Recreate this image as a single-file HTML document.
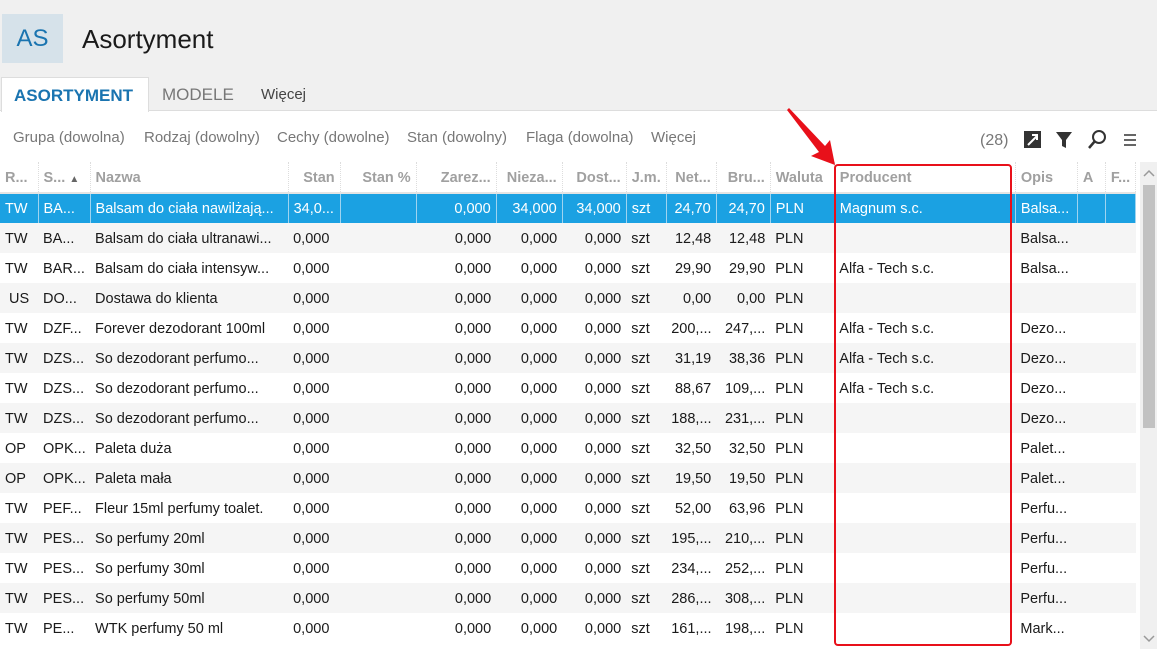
<!DOCTYPE html>
<html><head><meta charset="utf-8"><style>
*{margin:0;padding:0;box-sizing:border-box}
body{width:1157px;height:649px;overflow:hidden;background:#fff;font-family:"Liberation Sans",sans-serif;position:relative;color:#1a1a1a}
.top{position:absolute;left:0;top:0;width:1157px;height:77px;background:#f0f0f0}
.as{position:absolute;left:2px;top:14px;width:61px;height:49px;background:#d6e2ea;color:#1a74b0;font-size:24px;line-height:49px;text-align:center}
.title{position:absolute;left:82px;top:24px;font-size:26px;color:#1a1a1a}
.tabs{position:absolute;left:0;top:77px;width:1157px;height:34px;background:#f0f0f0;border-bottom:1px solid #ddd}
.tab1{position:absolute;left:1px;top:0;width:148px;height:35px;background:#fff;border:1px solid #ddd;border-bottom:none;color:#1a74b0;font-weight:bold;font-size:17px;line-height:36px;padding-left:12px}
.tab{position:absolute;top:1px;line-height:34px;font-size:17px;color:#777}
.filters{position:absolute;left:0;top:112px;height:50px;width:1157px;background:#fff}
.f{position:absolute;top:15px;font-size:15px;color:#777}
table{position:absolute;left:0;top:162px;border-collapse:collapse;table-layout:fixed;width:1136px;font-size:14.5px}
td,th{height:30px;white-space:nowrap;overflow:hidden;padding:1px 5px 0;font-weight:normal}
th{color:#a0a0a0;font-weight:bold;text-align:left;border-right:1px dotted #ddd;border-bottom:2px solid #e4e4e4;height:31px}
th.r,td.r{text-align:right}
tr.s{background:#f5f5f5}
tr.sel td{background:#1ba1e2;color:#fff;border-right:1px solid #9fd4f0}
.sb{position:absolute;left:1140px;top:162px;width:17px;height:487px;background:#f0f0f0}
.thumb{position:absolute;left:1143px;top:185px;width:12px;height:243px;background:#c2c2c2}
.redbox{position:absolute;left:834px;top:164px;width:178px;height:482px;border:2px solid #e8101a;border-radius:4px}
</style></head><body>
<div class="top"><div class="as">AS</div><div class="title">Asortyment</div></div>
<div class="tabs"><div class="tab1">ASORTYMENT</div><div class="tab" style="left:162px">MODELE</div><div class="tab" style="left:261px;font-size:15px;color:#444">Więcej</div></div>
<div class="filters">
<span class="f" style="left:13px;top:17px">Grupa (dowolna)</span><span class="f" style="left:144px;top:17px">Rodzaj (dowolny)</span><span class="f" style="left:277px;top:17px">Cechy (dowolne)</span><span class="f" style="left:407px;top:17px">Stan (dowolny)</span><span class="f" style="left:526px;top:17px">Flaga (dowolna)</span><span class="f" style="left:651px;top:17px">Więcej</span>
<span class="f" style="left:980px;top:20px;font-size:16px">(28)</span>
<svg style="position:absolute;left:1023px;top:18px" width="20" height="20"><rect x="1" y="1" width="17" height="17" fill="#333"/><path d="M5 15 L14 6 M9 5 H14 V10" stroke="#fff" stroke-width="2" fill="none"/></svg>
<svg style="position:absolute;left:1055px;top:18px" width="18" height="20"><path d="M1 2 H17 L11 10 V18 L7 16 V10 Z" fill="#333"/></svg>
<svg style="position:absolute;left:1087px;top:17px" width="22" height="22"><circle cx="12" cy="8" r="6" stroke="#333" stroke-width="2" fill="none"/><path d="M8 12 L2 19" stroke="#333" stroke-width="2.5"/></svg>
<svg style="position:absolute;left:1123px;top:21px" width="14" height="14"><path d="M1 2H13M1 7H13M1 12H13" stroke="#333" stroke-width="1.5"/></svg>
</div>
<table>
<colgroup><col style="width:38px"><col style="width:52px"><col style="width:198px"><col style="width:52px"><col style="width:76px"><col style="width:80px"><col style="width:66px"><col style="width:64px"><col style="width:40px"><col style="width:50px"><col style="width:54px"><col style="width:64px"><col style="width:181px"><col style="width:62px"><col style="width:28px"><col style="width:30px"></colgroup>
<tr><th>R...</th><th>S... <span style="font-size:10px;color:#666">▲</span></th><th>Nazwa</th><th class="r">Stan</th><th class="r">Stan %</th><th class="r">Zarez...</th><th class="r">Nieza...</th><th class="r">Dost...</th><th>J.m.</th><th class="r">Net...</th><th class="r">Bru...</th><th>Waluta</th><th>Producent</th><th>Opis</th><th>A</th><th>F...</th></tr>
<tr class="sel"><td>TW</td><td>BA...</td><td>Balsam do ciała nawilżają...</td><td>34,0...</td><td></td><td class="r">0,000</td><td class="r">34,000</td><td class="r">34,000</td><td>szt</td><td class="r">24,70</td><td class="r">24,70</td><td>PLN</td><td>Magnum s.c.</td><td>Balsa...</td><td></td><td></td></tr>
<tr class="s"><td>TW</td><td>BA...</td><td>Balsam do ciała ultranawi...</td><td>0,000</td><td></td><td class="r">0,000</td><td class="r">0,000</td><td class="r">0,000</td><td>szt</td><td class="r">12,48</td><td class="r">12,48</td><td>PLN</td><td></td><td>Balsa...</td><td></td><td></td></tr>
<tr><td>TW</td><td>BAR...</td><td>Balsam do ciała intensyw...</td><td>0,000</td><td></td><td class="r">0,000</td><td class="r">0,000</td><td class="r">0,000</td><td>szt</td><td class="r">29,90</td><td class="r">29,90</td><td>PLN</td><td>Alfa - Tech s.c.</td><td>Balsa...</td><td></td><td></td></tr>
<tr class="s"><td>&nbsp;US</td><td>DO...</td><td>Dostawa do klienta</td><td>0,000</td><td></td><td class="r">0,000</td><td class="r">0,000</td><td class="r">0,000</td><td>szt</td><td class="r">0,00</td><td class="r">0,00</td><td>PLN</td><td></td><td></td><td></td><td></td></tr>
<tr><td>TW</td><td>DZF...</td><td>Forever dezodorant 100ml</td><td>0,000</td><td></td><td class="r">0,000</td><td class="r">0,000</td><td class="r">0,000</td><td>szt</td><td class="r">200,...</td><td class="r">247,...</td><td>PLN</td><td>Alfa - Tech s.c.</td><td>Dezo...</td><td></td><td></td></tr>
<tr class="s"><td>TW</td><td>DZS...</td><td>So dezodorant perfumo...</td><td>0,000</td><td></td><td class="r">0,000</td><td class="r">0,000</td><td class="r">0,000</td><td>szt</td><td class="r">31,19</td><td class="r">38,36</td><td>PLN</td><td>Alfa - Tech s.c.</td><td>Dezo...</td><td></td><td></td></tr>
<tr><td>TW</td><td>DZS...</td><td>So dezodorant perfumo...</td><td>0,000</td><td></td><td class="r">0,000</td><td class="r">0,000</td><td class="r">0,000</td><td>szt</td><td class="r">88,67</td><td class="r">109,...</td><td>PLN</td><td>Alfa - Tech s.c.</td><td>Dezo...</td><td></td><td></td></tr>
<tr class="s"><td>TW</td><td>DZS...</td><td>So dezodorant perfumo...</td><td>0,000</td><td></td><td class="r">0,000</td><td class="r">0,000</td><td class="r">0,000</td><td>szt</td><td class="r">188,...</td><td class="r">231,...</td><td>PLN</td><td></td><td>Dezo...</td><td></td><td></td></tr>
<tr><td>OP</td><td>OPK...</td><td>Paleta duża</td><td>0,000</td><td></td><td class="r">0,000</td><td class="r">0,000</td><td class="r">0,000</td><td>szt</td><td class="r">32,50</td><td class="r">32,50</td><td>PLN</td><td></td><td>Palet...</td><td></td><td></td></tr>
<tr class="s"><td>OP</td><td>OPK...</td><td>Paleta mała</td><td>0,000</td><td></td><td class="r">0,000</td><td class="r">0,000</td><td class="r">0,000</td><td>szt</td><td class="r">19,50</td><td class="r">19,50</td><td>PLN</td><td></td><td>Palet...</td><td></td><td></td></tr>
<tr><td>TW</td><td>PEF...</td><td>Fleur 15ml perfumy toalet.</td><td>0,000</td><td></td><td class="r">0,000</td><td class="r">0,000</td><td class="r">0,000</td><td>szt</td><td class="r">52,00</td><td class="r">63,96</td><td>PLN</td><td></td><td>Perfu...</td><td></td><td></td></tr>
<tr class="s"><td>TW</td><td>PES...</td><td>So perfumy 20ml</td><td>0,000</td><td></td><td class="r">0,000</td><td class="r">0,000</td><td class="r">0,000</td><td>szt</td><td class="r">195,...</td><td class="r">210,...</td><td>PLN</td><td></td><td>Perfu...</td><td></td><td></td></tr>
<tr><td>TW</td><td>PES...</td><td>So perfumy 30ml</td><td>0,000</td><td></td><td class="r">0,000</td><td class="r">0,000</td><td class="r">0,000</td><td>szt</td><td class="r">234,...</td><td class="r">252,...</td><td>PLN</td><td></td><td>Perfu...</td><td></td><td></td></tr>
<tr class="s"><td>TW</td><td>PES...</td><td>So perfumy 50ml</td><td>0,000</td><td></td><td class="r">0,000</td><td class="r">0,000</td><td class="r">0,000</td><td>szt</td><td class="r">286,...</td><td class="r">308,...</td><td>PLN</td><td></td><td>Perfu...</td><td></td><td></td></tr>
<tr><td>TW</td><td>PE...</td><td>WTK perfumy 50 ml</td><td>0,000</td><td></td><td class="r">0,000</td><td class="r">0,000</td><td class="r">0,000</td><td>szt</td><td class="r">161,...</td><td class="r">198,...</td><td>PLN</td><td></td><td>Mark...</td><td></td><td></td></tr>
</table>
<div class="sb"></div><div class="thumb"></div>
<svg style="position:absolute;left:1142px;top:168px" width="14" height="10"><path d="M2 8 L7 3 L12 8" stroke="#999" stroke-width="1.5" fill="none"/></svg>
<svg style="position:absolute;left:1142px;top:634px" width="14" height="10"><path d="M2 2 L7 7 L12 2" stroke="#999" stroke-width="1.5" fill="none"/></svg>
<div class="redbox"></div>
<svg style="position:absolute;left:780px;top:100px" width="60" height="70"><path d="M9 8 L45 46 L50 40 L55 65 L31 56 L39 52 L7 10 Z" fill="#e8101a"/></svg>
</body></html>
